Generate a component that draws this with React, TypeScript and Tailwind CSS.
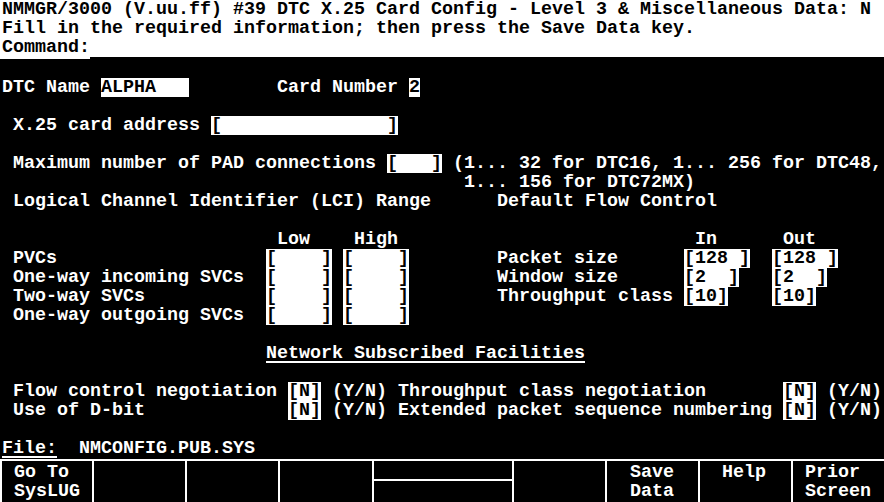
import type { ReactNode } from "react";

// one terminal line: 80 cols x 11px, 19px tall
function Line({ children }: { children?: ReactNode }) {
  return <div className="h-[19px] leading-[19px] whitespace-pre pl-[2px]">{children}</div>;
}

function Field({ children }: { children: ReactNode }) {
  return <span className="inline-block h-[19px] align-top bg-white text-black">{children}</span>;
}

function Under({ children }: { children: ReactNode }) {
  return <span className="inline-block h-[19px] align-top border-b-2 border-white">{children}</span>;
}

const keys = [
  { w: "w-[92px]", pl: "pl-[12px]", a: "Go To", b: "SysLUG" },
  { w: "w-[93px]", pl: "pl-[12px]", a: "", b: "" },
  { w: "w-[93px]", pl: "pl-[12px]", a: "", b: "" },
  { w: "w-[94px]", pl: "pl-[12px]", a: "", b: "" },
];
const keysRight = [
  { w: "w-[93px]", pl: "pl-[12px]", a: "", b: "" },
  { w: "w-[93px]", pl: "pl-[23px]", a: "Save", b: "Data" },
  { w: "w-[93px]", pl: "pl-[22px]", a: "Help", b: "" },
  { w: "w-[93px]", pl: "pl-[12px]", a: "Prior", b: "Screen" },
];

function Key({ k }: { k: { w: string; pl: string; a: string; b: string } }) {
  return (
    <div className={`${k.w} ${k.pl} h-full border-l-2 border-white pt-[2px] leading-[19px] whitespace-pre`}>
      <div>{k.a}</div>
      <div>{k.b}</div>
    </div>
  );
}

export default function App() {
  return (
    <div
      className="w-[884px] h-[502px] bg-black text-white text-[18.33px] font-bold overflow-hidden"
      style={{ fontFamily: '"Liberation Mono", monospace' }}
    >
      <div className="h-[57px] bg-white text-black">
        <Line>NMMGR/3000 (V.uu.ff) #39 DTC X.25 Card Config - Level 3 &amp; Miscellaneous Data: N</Line>
        <Line>Fill in the required information; then press the Save Data key.</Line>
        <Line>Command:</Line>
      </div>
      <div className="h-[2px]">
        <div className="w-[90px] h-[2px] bg-white" />
      </div>

      <Line />
      <Line>
        DTC Name <Field>ALPHA   </Field>        Card Number <Field>2</Field>
      </Line>
      <Line />
      <Line>
        {" X.25 card address "}<Field>[               ]</Field>
      </Line>
      <Line />
      <Line>
        {" Maximum number of PAD connections "}<Field>[   ]</Field> (1... 32 for DTC16, 1... 256 for DTC48,
      </Line>
      <Line>{"                                          1... 156 for DTC72MX)"}</Line>
      <Line>{" Logical Channel Identifier (LCI) Range      Default Flow Control"}</Line>
      <Line />
      <Line>{"                         Low    High                           In      Out"}</Line>
      <Line>
        {" PVCs                   "}<Field>[    ]</Field> <Field>[    ]</Field>
        {"        Packet size      "}<Field>[128 ]</Field>{"  "}<Field>[128 ]</Field>
      </Line>
      <Line>
        {" One-way incoming SVCs  "}<Field>[    ]</Field> <Field>[    ]</Field>
        {"        Window size      "}<Field>[2  ]</Field>{"   "}<Field>[2  ]</Field>
      </Line>
      <Line>
        {" Two-way SVCs           "}<Field>[    ]</Field> <Field>[    ]</Field>
        {"        Throughput class "}<Field>[10]</Field>{"    "}<Field>[10]</Field>
      </Line>
      <Line>
        {" One-way outgoing SVCs  "}<Field>[    ]</Field> <Field>[    ]</Field>
      </Line>
      <Line />
      <Line>
        {"                        "}<Under>Network Subscribed Facilities</Under>
      </Line>
      <Line />
      <Line>
        {" Flow control negotiation "}<Field>[N]</Field>{" (Y/N) Throughput class negotiation       "}
        <Field>[N]</Field> (Y/N)
      </Line>
      <Line>
        {" Use of D-bit             "}<Field>[N]</Field>{" (Y/N) Extended packet sequence numbering "}
        <Field>[N]</Field> (Y/N)
      </Line>
      <Line />
      <Line>
        <Under>File:</Under>{"  NMCONFIG.PUB.SYS"}
      </Line>

      <div className="mt-[1px] h-[44px] border-t-2 border-white flex">
        {keys.map((k, i) => (
          <Key key={i} k={k} />
        ))}
        <div className="w-[140px] h-full border-l-2 border-white flex flex-col">
          <div className="h-[20px] border-b-2 border-white" />
          <div className="flex-1" />
        </div>
        {keysRight.map((k, i) => (
          <Key key={i} k={k} />
        ))}
      </div>
    </div>
  );
}
